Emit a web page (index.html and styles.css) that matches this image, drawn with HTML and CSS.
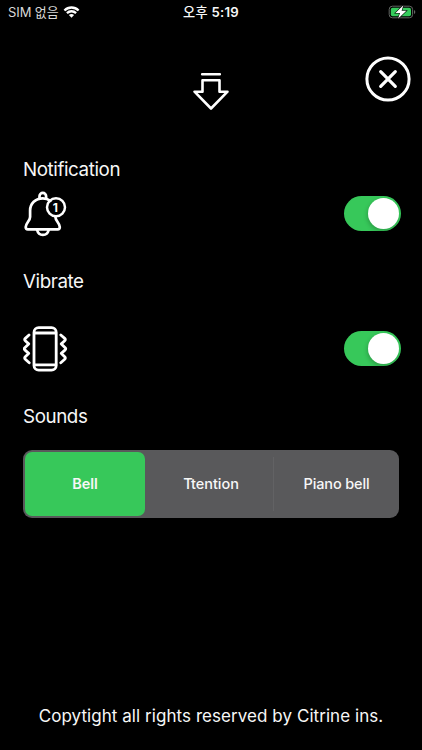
FILE: index.html
```html
<!DOCTYPE html>
<html lang="en">
<head>
<meta charset="utf-8">
<title>Settings</title>
<link rel="stylesheet" href="styles.css">
</head>
<body>
<div class="screen">
  <div class="status">
    <div class="carrier">
      <span class="carrier-name">SIM 없음</span>
      <svg class="wifi" width="17" height="12" viewBox="0 0 16 12" fill="none" stroke="#fff" stroke-width="2.3">
        <path d="M.9 4.5C5 .5 11 .5 15.1 4.5M3.4 7.1C6 4.6 10 4.6 12.6 7.1"/>
        <path d="M8 11.7 5.4 9.1Q8 7 10.6 9.1Z" fill="#fff" stroke="none"/>
      </svg>
    </div>
    <div class="time"><span class="meridiem">오후</span> 5:19</div>
    <svg class="battery" width="28" height="14" viewBox="0 0 28 14">
      <rect x="1.2" y="1.2" width="23.4" height="11.6" rx="3.2" fill="none" stroke="#626663"/>
      <rect x="2.8" y="2.8" width="20.2" height="8.4" rx="1.8" fill="#35cb5c"/>
      <path d="M26 5v4q1.3-.6 1.3-2T26 5Z" fill="#626663"/>
      <path d="M15.4.2 7.4 8h4.6L10 13.8l8.4-8h-4.8Z" fill="#fff" stroke="#000" stroke-width="1.1" paint-order="stroke"/>
    </svg>
  </div>
  <header class="header">
    <svg class="arrow" width="38" height="40" viewBox="0 0 38 40" fill="none" stroke="#fff" stroke-width="2.6" stroke-linejoin="round" stroke-linecap="round">
      <path d="M10.2 3.2h17.6M10.5 9.2h17v11.5h8L19 37.5 2.5 20.7h8Z"/>
    </svg>
    <svg class="close" width="46" height="46" viewBox="0 0 46 46" fill="none" stroke="#fff" stroke-width="3" stroke-linecap="round">
      <circle cx="23" cy="23" r="21.1"/>
      <path d="M15.7 15.7l14.6 14.6M30.3 15.7 15.7 30.3" stroke-width="3.2"/>
    </svg>
  </header>
  <main class="settings">
    <section>
      <h2 class="title notification">Notification</h2>
      <div class="row">
        <svg class="icon" width="46" height="48" viewBox="0 0 46 48" fill="none" stroke="#fff" stroke-width="2.7" stroke-linecap="round" stroke-linejoin="round">
          <path d="M16.5 8.7V6.2a3.3 3.3 0 0 1 6.6 0v2.5"/>
          <path d="M27.5 10.8C25.3 9.2 22.6 8.3 19.8 8.3 12.5 8.3 7.1 13.6 7.1 20.6V27c0 3.9-4.4 6.2-4.4 10.1 0 1.5.8 2.3 2.1 2.3h29.9c1.4 0 2.1-.8 2.1-2.3 0-3.9-4.4-6.2-4.4-10.1v-.4"/>
          <path d="M14.1 40c.8 3.2 2.9 4.9 5.8 4.9s5-1.7 5.8-4.9"/>
          <circle cx="33" cy="17.3" r="9" stroke-width="2.5"/>
          <text x="32.4" y="21.5" class="badge" text-anchor="middle">1</text>
        </svg>
        <div class="switch"><span class="knob"></span></div>
      </div>
    </section>
    <section class="vibration">
      <h2 class="title vibrate">Vibrate</h2>
      <div class="row">
        <svg class="icon" width="46" height="48" viewBox="1 0 46 48" fill="none" stroke="#fff" stroke-width="2.8" stroke-linecap="round" stroke-linejoin="round">
          <rect x="12" y="2.7" width="22.2" height="42.4" rx="4.7"/>
          <path d="M12.4 8h21.4M12.4 39.9h21.4"/>
          <path d="M7 10 3.3 13.4Q2 14.6 3.3 15.8L6.7 18.9 2.8 22.7Q1.8 23.8 2.8 24.9L6.7 28.4 3.3 31.7Q2 33 3.3 34.2L7.2 37.7M38.8 10l3.9 3.4q1.3 1.2 0 2.4L39.3 18.9l3.9 3.8q1 1.1 0 2.2L39.3 28.4l3.4 3.3q1.3 1.3 0 2.5L38.8 37.7"/>
        </svg>
        <div class="switch"><span class="knob"></span></div>
      </div>
    </section>
    <section class="sound-section">
      <h2 class="title sounds">Sounds</h2>
      <div class="segments">
        <div class="segment selected">Bell</div>
        <div class="segment attention">Ttention</div>
        <div class="segment piano">Piano bell</div>
      </div>
    </section>
  </main>
  <footer class="footer"><span>Copytight all rights reserved by Citrine ins.</span></footer>
</div>
</body>
</html>
```
FILE: styles.css
```css
* { box-sizing: border-box; }
body { margin: 0; background: #000; }
svg { display: block; }
.screen {
  width: 422px;
  height: 750px;
  display: flex;
  flex-direction: column;
  overflow: hidden;
  background: #000;
  color: #f7f7f7;
  font-family: Inter, "Noto Sans CJK KR", sans-serif;
}
.status {
  height: 24px;
  display: grid;
  grid-template-columns: 1fr auto 1fr;
  align-items: center;
  padding: 0 6px 0 8px;
  line-height: 24px;
}
.carrier { display: flex; align-items: center; gap: 4px; font-size: 13px; color: #d8d8d8; }
.carrier-name { letter-spacing: -.1px; }
.time { margin-right: 2px; font-size: 13.2px; font-weight: 600; letter-spacing: .25px; }
.meridiem { font-weight: 500; }
.battery { justify-self: end; }
.header {
  height: 135px;
  display: grid;
  grid-template-columns: 1fr 38px 1fr;
  align-items: start;
  padding: 32px 11px 0;
}
.arrow { grid-column: 2; margin-top: 15px; }
.close { grid-column: 3; justify-self: end; }
.settings { padding: 0 21px 0 23px; }
.title { margin: 0; height: 24px; line-height: 22px; font-size: 18.8px; font-weight: 400; letter-spacing: -.42px; white-space: nowrap; }
.row { display: flex; align-items: center; justify-content: space-between; height: 61px; }
.vibration { margin-top: 27px; }
.vibration .row { height: 107px; }
.sound-section { margin-top: 4px; }
.badge { fill: #fff; stroke: none; font: 700 12px Inter, sans-serif; }
.switch {
  width: 57px;
  height: 35px;
  border-radius: 18px;
  padding: 2px;
  background: #37c85a;
  display: flex;
  justify-content: flex-end;
}
.knob { width: 31px; height: 31px; border-radius: 50%; background: #fff; box-shadow: -1px 2px 4px #0003; }
.segments {
  width: 376px;
  height: 68px;
  margin-top: 20px;
  padding: 2px;
  border-radius: 9px;
  background: #59595b;
  display: grid;
  grid-template-columns: 120px 129px 1fr;
}
.segment { display: flex; align-items: center; justify-content: center; padding-bottom: 1px; font-size: 14.5px; font-weight: 500; letter-spacing: -.05px; }
.selected { background: #37c85a; border-radius: 7px; font-weight: 600; }
.attention { padding-left: 3px; background: linear-gradient(#626264, #626264) right center / 1px 54px no-repeat; }
.piano { padding-left: 2px; letter-spacing: -.15px; }
.footer { margin-top: auto; height: 46px; text-align: center; font-size: 17px; letter-spacing: .06px; line-height: 24px; white-space: nowrap; }
```
